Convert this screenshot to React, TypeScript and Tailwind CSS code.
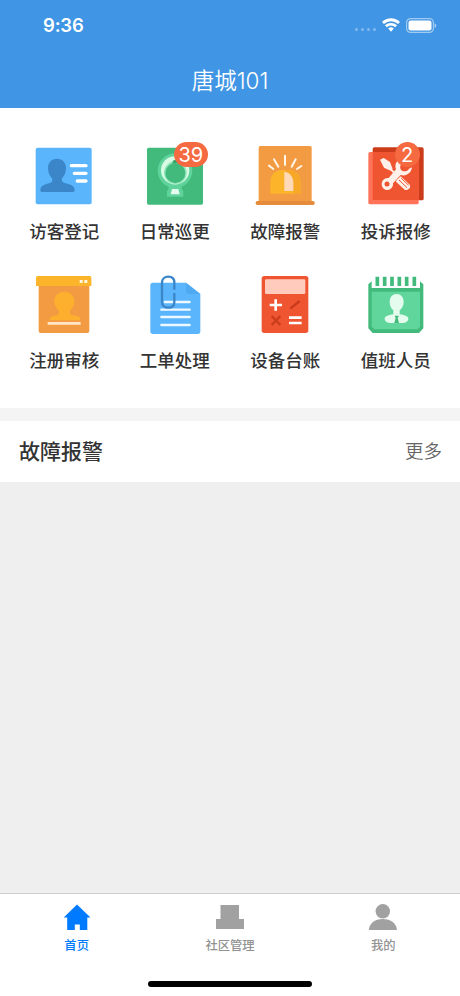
import type { ReactNode } from "react";

function Glyph({ viewBox, children }: { viewBox: string; children: ReactNode }) {
  return (
    <svg viewBox={viewBox} className="size-16 shrink-0" fill="none">
      {children}
    </svg>
  );
}

function VisitorIcon() {
  return (
    <Glyph viewBox="37 27 192 192">
      <rect x="48" y="38" width="168" height="170" rx="6" fill="#5ab5fc" />
      <path
        d="M112 71c16 0 27 11 27 28 0 13-5 24-12 31-2 7 0 11 6 13l20 6c8 3 12 9 12 17 0 3-2 5-5 5H67c-3 0-5-2-5-5 0-9 4-14 12-17l18-6c6-2 7-6 5-13-7-7-12-18-12-31 0-17 11-28 27-28Z"
        fill="#3a86c8"
      />
      <g stroke="#fff" strokeWidth="10" strokeLinecap="round">
        <path d="M155 92h44M164 115h35M173 138h26" />
      </g>
    </Glyph>
  );
}

function PatrolIcon() {
  return (
    <Glyph viewBox="38 27 192 192">
      <rect x="50" y="38" width="168" height="171" rx="5" fill="#41ba7c" />
      <path d="M115 150h39v12l5 6v17h-49v-17l5-6Z" fill="#5fd39b" />
      <circle cx="134" cy="107" r="52" fill="#5fd39b" />
      <circle cx="134.500" cy="106" r="42.500" fill="#d9fbe6" />
      <circle cx="135" cy="113" r="34" fill="#8ee5b8" />
      <circle cx="135" cy="114" r="30" fill="#41ba7c" />
      <path d="M125 162h19l4 16h-27Z" fill="#e4fced" />
      <path d="M125 85l5-10h12l5 10Z" fill="#39a76e" />
    </Glyph>
  );
}

function AlarmIcon() {
  return (
    <Glyph viewBox="40 27 192 192">
      <path d="M57 38q0-5 5-5h149q5 0 5 5v161H57Z" fill="#f39b42" />
      <rect x="48" y="198" width="177" height="12" rx="5" fill="#e58b3c" />
      <path d="M92 176v-34c0-23 15-37 37-37h17c22 0 37 14 37 37v34Z" fill="#fcb52a" />
      <path d="M140 105h6c22 0 37 14 37 37v34h-22v-32c0-19-8-31-27-33Z" fill="#f7a829" />
      <path d="M134 110c18 3 27 16 27 36v22h-27Z" fill="#ffd9b8" />
      <g stroke="#fff6e8" strokeWidth="6" strokeLinecap="round">
        <path d="M136 62v28M103 73l13 22M168 73l-12 22M88 92l13 10M185 93l-13 9" />
      </g>
    </Glyph>
  );
}

function RepairIcon() {
  return (
    <Glyph viewBox="41 27 192 192">
      <rect x="67" y="37" width="153" height="159" rx="5" fill="#cb3c1b" />
      <rect x="54" y="51" width="151" height="157" rx="5" fill="#ff7458" />
      <path d="M67 51h138v144H67Z" fill="#f05531" />
      <path d="M89 74l11-5 19 12 8 21-6 5-20-9Z" fill="#fff1ea" />
      <path d="M119 100l12 13" stroke="#fff1ea" strokeWidth="5" />
      <path
        d="M155 71c-16 3-23 17-18 32l-22 26c-11-2-21 7-21 18 0 10 7 18 17 18s18-8 17-20l23-25c17 5 32-6 34-23l-9 4c-5 9-18 11-24 3-5-8-2-17 7-21Z"
        fill="#fff1ea"
      />
      <circle cx="110" cy="147" r="7.500" fill="#f05531" />
      <path d="M139 135l12-11 28 26v9l-9 6h-6l-27-25Z" fill="#fff1ea" />
      <path d="M146 135l24 23M153 130l22 21" stroke="#f05531" strokeWidth="3" />
    </Glyph>
  );
}

function ReviewIcon() {
  return (
    <Glyph viewBox="37 24 192 192">
      <path d="M57 60h152v138q0 6-6 6H63q-6 0-6-6Z" fill="#f39b42" />
      <path d="M49 38q0-5 5-5h156q5 0 5 5v25H49Z" fill="#fcb52a" />
      <path d="M180 45h9v9h-9ZM194 45h9v9h-9Z" fill="#fff6e0" />
      <path
        d="M134 80c18 0 30 12 30 29 0 12-5 20-12 27-3 9 0 14 7 15l15 3c6 1 8 5 8 12H90c0-7 3-11 9-12l12-3c7-1 9-6 6-15-7-7-13-15-13-27 0-17 12-29 30-29Z"
        fill="#fcb02d"
      />
      <path d="M84 175h99" stroke="#ffe6c4" strokeWidth="8" />
    </Glyph>
  );
}

function OrderIcon() {
  return (
    <Glyph viewBox="38 24 192 192">
      <path d="M60 61q0-8 8-8h99l43 34v112q0 8-8 8H68q-8 0-8-8Z" fill="#5ab5fc" />
      <path d="M167 53l43 34h-34q-9 0-9-9Z" fill="#50aaf2" />
      <g stroke="#eef9ff" strokeWidth="7" strokeLinecap="round">
        <path d="M103 111h75M93 134h85M93 156h85M93 180h85" />
      </g>
      <path
        d="M132 74V53c0-11-7-18-18-18s-19 7-19 18v57c0 11 8 18 19 18s18-7 18-18V84"
        stroke="#3a86c8"
        strokeWidth="7"
      />
    </Glyph>
  );
}

function LedgerIcon() {
  return (
    <Glyph viewBox="40 24 192 192">
      <rect x="66" y="33" width="140" height="171" rx="8" fill="#f05531" />
      <rect x="76" y="43" width="121" height="44" rx="4" fill="#ffcbbd" />
      <path d="M108 103v34M90 120h37M148 158h38M148 174h38" stroke="#fff" strokeWidth="8" />
      <path d="M152 131l28-23M96 153l26 27M122 153l-26 27" stroke="#c83c1c" strokeWidth="7" />
    </Glyph>
  );
}

function StaffIcon() {
  return (
    <Glyph viewBox="41 24 192 192">
      <path d="M54 58l10-9v20h145V49l10 9v132l-13 14H67l-13-14Z" fill="#41ba7c" />
      <path d="M64 80h145v105l-7 8H72l-8-8Z" fill="#60d69d" />
      <path d="M81 35v28M103 35v28M125 35v28M147 35v28M169 35v28M192 35v28" stroke="#41ba7c" strokeWidth="11" />
      <path
        d="M139 87c12 0 21 9 21 23 0 12-5 20-12 26v12c6 1 12 2 18 4 5 2 8 5 8 9 0 8-9 13-20 13h-31c-11 0-20-5-20-13 0-4 3-7 8-9 6-2 12-3 18-4v-12c-7-6-11-14-11-26 0-14 9-23 21-23Z"
        fill="#e4fced"
      />
      <path d="M133 152h13l-4 7 4 15h-14l4-15Z" fill="#41ba7c" />
    </Glyph>
  );
}

const menu = [
  { label: "访客登记", icon: <VisitorIcon /> },
  { label: "日常巡更", icon: <PatrolIcon />, badge: "39" },
  { label: "故障报警", icon: <AlarmIcon /> },
  { label: "投诉报修", icon: <RepairIcon />, badge: "2" },
  { label: "注册审核", icon: <ReviewIcon /> },
  { label: "工单处理", icon: <OrderIcon /> },
  { label: "设备台账", icon: <LedgerIcon /> },
  { label: "值班人员", icon: <StaffIcon /> },
];

function StatusBar() {
  return (
    <div className="flex h-[50px] items-center justify-between pl-[43px] pr-[23px]">
      <span className="font-['Inter'] text-[18.500px] font-semibold leading-none tracking-[-0.2px]">9:36</span>
      <div className="flex items-center">
        <div className="mr-[6px] mt-[9px] flex gap-[2.500px]">
          {[0, 1, 2, 3].map((dot) => (
            <span key={dot} className="size-[3.500px] rounded-full bg-white/35" />
          ))}
        </div>
        <svg viewBox="0 0 18 14" className="mr-[6px] h-[14px] w-[18px]" fill="none">
          <path d="M1 5a11.500 11.500 0 0 1 16 0" stroke="#fff" strokeWidth="2.800" />
          <path d="M3.900 8.300a7.300 7.300 0 0 1 10.200 0" stroke="#fff" strokeWidth="2.600" />
          <path d="M6.200 10.600a4.100 4.100 0 0 1 5.600 0L9 13.700Z" fill="#fff" />
        </svg>
        <svg viewBox="0 0 31 15" className="h-[15px] w-[31px]" fill="none">
          <rect x=".6" y=".6" width="26.800" height="13.800" rx="4" stroke="#fff" strokeOpacity=".5" strokeWidth="1.200" />
          <rect x="2.500" y="2.500" width="23" height="10" rx="2.200" fill="#fff" />
          <path d="M28.700 5.200c2 .8 2 3.900 0 4.700Z" fill="#fff" fillOpacity=".6" />
        </svg>
      </div>
    </div>
  );
}

function TabBar() {
  return (
    <nav className="flex h-[103px] flex-col border-t border-[#cfcfcf] bg-white">
      <div className="grid grid-cols-3 pt-[8px] text-[12.300px] font-medium text-[#929292]">
        <div className="flex flex-col items-center text-[#007aff]">
          <svg viewBox="0 0 30 30" className="size-[30px]" fill="currentColor">
            <path d="M15 2.500 28.500 15.500h-3.200V28h-7.500v-5.500h-5V28H5.200V15.500H1.700Z" />
          </svg>
          <span className="mt-[5px] leading-[18px]">首页</span>
        </div>
        <div className="flex flex-col items-center">
          <svg viewBox="0 0 30 30" className="size-[30px]" fill="#a1a1a1">
            <path d="M5.500 3H24v14h5v10H1V17h4.500Z" />
          </svg>
          <span className="mt-[5px] leading-[18px]">社区管理</span>
        </div>
        <div className="flex flex-col items-center">
          <svg viewBox="0 0 30 30" className="size-[30px]" fill="#a1a1a1">
            <circle cx="14.800" cy="9.300" r="7.200" />
            <path d="M.8 28c.5-6.500 5.800-11 14-11s13.700 4.500 14.200 11Z" />
          </svg>
          <span className="mt-[5px] leading-[18px]">我的</span>
        </div>
      </div>
      <div className="mx-auto mb-[9px] mt-auto h-[6px] w-[164px] rounded-full bg-black" />
    </nav>
  );
}

export default function App() {
  return (
    <div className="flex h-[996px] w-[460px] flex-col overflow-hidden bg-[#efefef] font-['Inter','Noto_Sans_CJK_SC',sans-serif]">
      <header className="h-[108px] bg-[#4095e5] text-white">
        <StatusBar />
        <h1 className="mt-[15px] text-center text-[22.500px] font-[350] leading-[32px]">唐城101</h1>
      </header>

      <section className="grid h-[300px] grid-cols-4 content-start bg-white px-[9px] pt-9">
        {menu.map(({ label, icon, badge }) => (
          <div key={label} className="relative flex h-[129px] flex-col items-center">
            {icon}
            {badge && (
              <span className="absolute left-[54px] top-[-2px] flex h-[25px] min-w-[25px] items-center justify-center rounded-full bg-[#f56a41] px-[5px] text-[20px] leading-none text-white">
                {badge}
              </span>
            )}
            <span className="mt-[11px] text-[17.500px] font-medium leading-[26px] text-[#333]">{label}</span>
          </div>
        ))}
      </section>

      <section className="mt-[13px] flex h-[61px] items-center justify-between bg-white pl-[19px] pr-[18px] shadow-[0_-13px_0_#f4f4f4]">
        <h2 className="text-[21px] font-medium text-[#333]">故障报警</h2>
        <span className="text-[18.500px] font-[350] text-[#666]">更多</span>
      </section>

      <div className="flex-1" />
      <TabBar />
    </div>
  );
}
